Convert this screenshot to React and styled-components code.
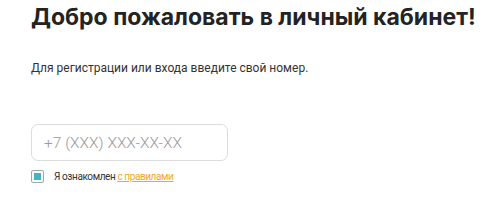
import React from "react";
import styled, { createGlobalStyle } from "styled-components";

const Global = createGlobalStyle`
  html, body { margin: 0; padding: 0; background: #fff; }
  body { font-family: Roboto, "Noto Sans", sans-serif; }
`;

const Page = styled.div`
  display: flex;
  flex-direction: column;
  align-items: flex-start;
  padding: 2px 0 0 31px;
`;

const Title = styled.h1`
  margin: 0;
  font-family: Inter, Roboto, sans-serif;
  font-weight: 700;
  font-size: 23px;
  line-height: 30px;
  color: #232323;
`;

const Subtitle = styled.p`
  margin: 28px 0 0;
  font-size: 12px;
  line-height: 16px;
  color: #333;
`;

const Field = styled.input`
  box-sizing: border-box;
  margin-top: 48px;
  width: 197px;
  height: 37px;
  padding: 0 12px;
  border: 1px solid #dcdcdc;
  border-radius: 7px;
  font-family: Roboto, sans-serif;
  font-size: 15.5px;
  font-weight: 300;
  color: #333;
  outline: none;
  &::placeholder { color: #9a9a9a; }
`;

const Agree = styled.label`
  display: flex;
  align-items: center;
  gap: 10px;
  margin-top: 9px;
  font-size: 10px;
  letter-spacing: -0.4px;
  color: #333;
`;

const Box = styled.span`
  box-sizing: border-box;
  width: 13px;
  height: 13px;
  border: 1px solid #9aa;
  border-radius: 2px;
  padding: 2px;
  display: flex;
  &::after {
    content: "";
    flex: 1;
    background: #44b3c2;
  }
`;

const Rules = styled.a`
  color: #f5a623;
  text-decoration: underline;
`;

export default function App() {
  return (
    <>
      <Global />
      <Page>
        <Title>Добро пожаловать в личный кабинет!</Title>
        <Subtitle>Для регистрации или входа введите свой номер.</Subtitle>
        <Field placeholder="+7 (XXX) XXX-XX-XX" />
        <Agree>
          <Box />
          <span>
            Я ознакомлен <Rules href="#">с правилами</Rules>
          </span>
        </Agree>
      </Page>
    </>
  );
}
